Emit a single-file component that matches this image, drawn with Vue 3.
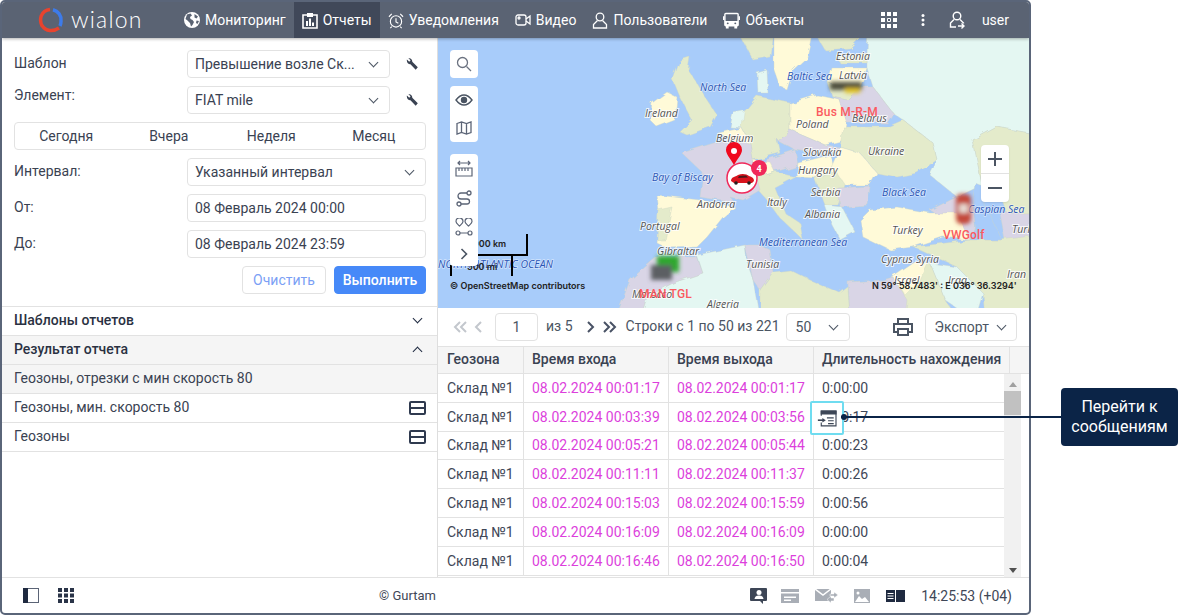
<script setup>
const navItems = [
  { label: 'Мониторинг', icon: 'globe' },
  { label: 'Отчеты', icon: 'report', active: true },
  { label: 'Уведомления', icon: 'alarm' },
  { label: 'Видео', icon: 'video' },
  { label: 'Пользователи', icon: 'user' },
  { label: 'Объекты', icon: 'bus' },
];

const quickRanges = ['Сегодня', 'Вчера', 'Неделя', 'Месяц'];

const rows = [
  ['00:01:17', '00:01:17', '0:00:00'],
  ['00:03:39', '00:03:56', '0:00:17'],
  ['00:05:21', '00:05:44', '0:00:23'],
  ['00:11:11', '00:11:37', '0:00:26'],
  ['00:15:03', '00:15:59', '0:00:56'],
  ['00:16:09', '00:16:09', '0:00:00'],
  ['00:16:46', '00:16:50', '0:00:04'],
];

const land = [
  // russia, kazakhstan and the east
  { c: '#e4f7f2', p: '868,30 1040,30 1040,135 997,127 973,140 982,185 957,197 930,175 937,160 933,143 903,120 893,113 873,87 867,68 867,53' },
  { c: '#e4ebcb', p: '973,140 997,127 1040,135 1040,213 1007,213 1000,195 982,185' },
  { c: '#d9d5e6', p: '1000,213 1040,213 1040,240 1005,240' },
  { c: '#e4ebcb', p: '970,240 1000,240 1040,235 1040,320 985,320 983,293 957,267 913,247' },
  { c: '#e4f7f2', p: '930,263 957,267 983,293 975,320 945,300' },
  { c: '#e4ebcb', p: '850,282 882,282 930,263 945,300 960,320 850,320' },
  { c: '#d9d5e6', p: '848,282 883,280 893,277 907,300 905,320 850,320' },
  { c: '#fffad8', p: '893,277 915,262 928,264 918,285 905,295' },
  // caucasus and caspian
  { c: '#d9d5e6', p: '930,210 957,197 972,205 975,225 970,240 955,225' },
  { c: '#a8ccfa', p: '975,183 985,187 985,205 995,225 1002,240 985,240 975,232 972,205' },
  // scandinavia
  { c: '#e4ebcb', p: '737,30 773,30 770,57 753,60' },
  { c: '#fffad8', p: '773,30 813,30 807,57 793,70 787,90 780,87 773,67' },
  { c: '#e4ebcb', p: '813,30 868,30 850,48 825,50' },
  { c: '#e4f7f2', p: '757,73 767,70 768,93 758,93' },
  // baltics
  { c: '#e4ebcb', p: '837,57 867,53 867,63 840,63' },
  { c: '#fffad8', p: '832,68 867,68 863,80 860,87 828,83' },
  { c: '#e4ebcb', p: '828,83 860,87 847,100 833,97' },
  // british isles
  { c: '#e4ebcb', p: '680,60 690,57 688,70 697,83 707,100 717,115 710,127 687,135 680,132 692,120 685,107 680,97 673,80' },
  { c: '#fffad8', p: '652,103 667,92 677,97 675,120 657,127 650,120' },
  // central europe
  { c: '#e4f7f2', p: '733,113 748,110 744,128 730,127' },
  { c: '#fffad8', p: '718,133 742,128 750,143 735,142' },
  { c: '#e4ebcb', p: '744,112 757,96 790,103 790,130 777,140 780,153 753,160 750,143 742,128' },
  { c: '#fffad8', p: '790,103 817,95 840,100 847,123 845,140 825,145 790,130' },
  { c: '#d9d5e6', p: '833,97 847,100 860,87 873,87 893,113 887,123 847,123 840,100' },
  { c: '#e4ebcb', p: '843,127 887,127 903,120 933,143 937,160 917,173 897,177 877,173 860,153 840,147' },
  { c: '#d9d5e6', p: '777,140 790,130 825,145 840,147 830,155 795,150' },
  { c: '#d9d5e6', p: '765,160 795,150 798,165 775,172' },
  { c: '#fffad8', p: '798,163 830,155 835,170 815,178 796,177' },
  { c: '#fffad8', p: '840,147 860,153 877,173 870,185 840,185 830,170' },
  { c: '#e4ebcb', p: '815,178 835,170 845,185 838,205 825,205' },
  { c: '#d9d5e6', p: '838,188 870,186 868,205 840,207' },
  // switzerland and italy
  { c: '#fffad8', p: '753,160 770,162 775,172 757,178' },
  { c: '#e4ebcb', p: '757,178 775,172 796,177 775,188 785,213 800,223 803,240 795,232 780,218 767,200 758,190' },
  // france, iberia
  { c: '#d9d5e6', p: '682,153 717,142 735,142 750,143 753,160 757,178 760,190 743,200 730,197 735,203 700,197 703,173' },
  { c: '#fffad8', p: '657,195 700,200 735,207 723,217 707,237 697,247 667,248 657,243 660,220' },
  { c: '#e4ebcb', p: '658,210 672,207 665,240 657,240' },
  // greece, turkey
  { c: '#e4f7f2', p: '825,205 842,207 855,232 840,240 832,225' },
  { c: '#fffad8', p: '860,220 870,210 897,207 930,213 957,213 970,240 943,237 913,247 890,250 863,237' },
  // north africa
  { c: '#d9d5e6', p: '657,257 697,257 703,273 673,283 647,297 640,320 615,320 630,280' },
  { c: '#e4f7f2', p: '697,255 745,245 747,262 753,280 760,320 640,320 647,297 673,283 703,273' },
  { c: '#d9d5e6', p: '745,245 760,245 770,250 773,272 760,290 753,280' },
  { c: '#e4ebcb', p: '773,272 790,270 810,280 840,293 848,287 850,320 760,320 760,290' },
];

const seaLabels = [
  { t: 'Baltic Sea', x: 787, y: 80 },
  { t: 'North Sea', x: 700, y: 91 },
  { t: 'Bay of Biscay', x: 652, y: 181 },
  { t: 'Black Sea', x: 882, y: 196 },
  { t: 'Caspian Sea', x: 968, y: 213 },
  { t: 'Mediterranean Sea', x: 759, y: 246 },
  { t: 'NORTH ATLANTIC OCEAN', x: 438, y: 268 },
];

const countryLabels = [
  { t: 'Estonia', x: 836, y: 60 },
  { t: 'Latvia', x: 839, y: 79 },
  { t: 'Ireland', x: 645, y: 117 },
  { t: 'Poland', x: 796, y: 128 },
  { t: 'Belarus', x: 852, y: 122 },
  { t: 'Belgium', x: 716, y: 142 },
  { t: 'Slovakia', x: 803, y: 156 },
  { t: 'Ukraine', x: 868, y: 155 },
  { t: 'Hungary', x: 798, y: 174 },
  { t: 'Andorra', x: 697, y: 208 },
  { t: 'Serbia', x: 811, y: 196 },
  { t: 'Italy', x: 767, y: 206 },
  { t: 'Portugal', x: 640, y: 230 },
  { t: 'Albania', x: 805, y: 218 },
  { t: 'Turkey', x: 892, y: 234 },
  { t: 'Gibraltar', x: 657, y: 255 },
  { t: 'Cyprus', x: 881, y: 263 },
  { t: 'Syria', x: 916, y: 263 },
  { t: 'Tunisia', x: 746, y: 268 },
  { t: 'Iran', x: 1007, y: 278 },
  { t: 'Israel', x: 894, y: 284 },
  { t: 'Iraq', x: 948, y: 284 },
  { t: 'Turk', x: 1012, y: 233 },
  { t: 'Morocco', x: 632, y: 298 },
  { t: 'Algeria', x: 707, y: 308 },
];
</script>

<template>
  <div class="page">
    <div class="window">
      <header class="topbar">
        <div class="logo">
          <svg width="26" height="26" viewBox="0 0 26 26" fill="none" stroke-width="3.500">
            <path d="M12 2.500A10.500 10.500 0 0 0 3.200 9C2 13 2.500 16 4 19" stroke="#e8432e" />
            <path d="M15 2.700A10.500 10.500 0 0 1 23 14C23 16 22.700 17.500 22 19" stroke="#3d7bea" />
            <path d="M4 18.500C8 24.500 15 25 21 21" stroke="#e8432e" />
          </svg>
          <span class="logo-text">wialon</span>
        </div>
        <nav class="nav">
          <a v-for="item in navItems" :key="item.label" class="nav-item" :class="{ 'nav-item--active': item.active }">
            <svg v-if="item.icon === 'globe'" width="16" height="16" viewBox="0 0 16 16">
              <circle cx="8" cy="8" r="8" fill="#fff" />
              <path d="M3 2.500 6.500 1.500 8 3.500 6 5 6.500 7 8.500 8 10 10 8.500 13 7 14.500 6 11 3.500 8.500 1.500 7ZM10.500 2 14 4.500 12.500 6.500 10.500 5.500ZM12.500 8.500 15 9 13.500 12 12 11Z" fill="#5a6373" />
            </svg>
            <svg v-else-if="item.icon === 'report'" width="16" height="17" viewBox="0 0 16 17">
              <path d="M1 3h14v13H1z" fill="none" stroke="#fff" stroke-width="1.600" />
              <path d="M5 1h6v4H5zM4 9h2v5H4zM7 6.500h2V14H7zM10 10.500h2V14h-2z" fill="#fff" />
            </svg>
            <svg v-else-if="item.icon === 'alarm'" width="16" height="17" viewBox="0 0 17 17" fill="none" stroke="#fff" stroke-width="1.200">
              <circle cx="8.500" cy="9.500" r="6" />
              <path d="M8.500 6v4l2.500 1.500M1 4.500 4 1.500M16 4.500l-3-3M4 15l-1.500 1.500M13 15l1.500 1.500" />
            </svg>
            <svg v-else-if="item.icon === 'video'" width="16" height="14" viewBox="0 0 16 14" fill="none" stroke="#fff" stroke-width="1.300">
              <rect x="1" y="2" width="10" height="10" rx="2" />
              <path d="M11 6 15 3v8l-4-3" />
              <circle cx="4" cy="5" r="1" />
            </svg>
            <svg v-else-if="item.icon === 'user'" width="16" height="17" viewBox="0 0 16 17" fill="none" stroke="#fff" stroke-width="1.300">
              <circle cx="8" cy="5" r="3.800" />
              <path d="M5.500 8.500 1.500 12.500V16h13v-3.500l-4-4" />
            </svg>
            <svg v-else width="17" height="17" viewBox="0 0 18 17">
              <path d="M3 1h12a1 1 0 0 1 1 1v11a1 1 0 0 1-1 1H3a1 1 0 0 1-1-1V2a1 1 0 0 1 1-1Z" fill="none" stroke="#fff" stroke-width="1.500" />
              <path d="M2 9h14v5H2zM3 14h3v3H3zM12 14h3v3h-3zM0 4h1.500v4H0zM16.500 4H18v4h-1.500z" fill="#fff" />
              <circle cx="5" cy="11.500" r="1" fill="#5a6373" />
              <circle cx="13" cy="11.500" r="1" fill="#5a6373" />
            </svg>
            <span>{{ item.label }}</span>
          </a>
        </nav>
        <div class="topbar-right">
          <svg width="16" height="16" viewBox="0 0 16 16" fill="#fff">
            <path d="M0 0h4v4H0zM6 0h4v4H6zM12 0h4v4h-4zM0 6h4v4H0zM12 6h4v4h-4zM0 12h4v4H0zM6 12h4v4H6zM12 12h4v4h-4z" />
            <path d="M6.500 6.500h3v3h-3z" fill="none" stroke="#fff" />
          </svg>
          <svg class="kebab" width="4" height="12" viewBox="0 0 4 12" fill="#fff">
            <circle cx="2" cy="1.500" r="1.500" />
            <circle cx="2" cy="6" r="1.500" />
            <circle cx="2" cy="10.500" r="1.500" />
          </svg>
          <svg class="user-icon" width="16" height="18" viewBox="0 0 16 18" fill="none" stroke="#fff" stroke-width="1.400">
            <circle cx="8" cy="5" r="3.800" />
            <path d="M5 8.500 1.500 12v4H7M11 8.500 14.500 12v.5M9 15h6M12.500 12.500 15 15l-2.500 2.500" />
          </svg>
          <span class="user-name">user</span>
        </div>
      </header>

      <div class="main">
        <aside class="side">
          <div class="form">
            <div class="form-row">
              <label class="form-label">Шаблон</label>
              <div class="select select--short"><span class="ellipsis">Превышение возле Ск...</span><i class="chev"></i></div>
              <svg class="wrench" width="12" height="12" viewBox="0 0 13 13"><path d="M1 1.500 3.500 4 5 2.500 2.500.3C5-.3 7 1.500 6.800 4L12.800 10 10.500 12.800 4.800 6.800C2.500 7 .3 4.500 1 1.500Z" fill="#3a4252" /></svg>
            </div>
            <div class="form-row">
              <label class="form-label form-label--up">Элемент:</label>
              <div class="select select--short"><span>FIAT mile</span><i class="chev"></i></div>
              <svg class="wrench" width="12" height="12" viewBox="0 0 13 13"><path d="M1 1.500 3.500 4 5 2.500 2.500.3C5-.3 7 1.500 6.800 4L12.800 10 10.500 12.800 4.800 6.800C2.500 7 .3 4.500 1 1.500Z" fill="#3a4252" /></svg>
            </div>
            <div class="ranges">
              <span v-for="range in quickRanges" :key="range">{{ range }}</span>
            </div>
            <div class="form-row">
              <label class="form-label form-label--low">Интервал:</label>
              <div class="select"><span>Указанный интервал</span><i class="chev"></i></div>
            </div>
            <div class="form-row">
              <label class="form-label">От:</label>
              <div class="select"><span>08 Февраль 2024 00:00</span></div>
            </div>
            <div class="form-row">
              <label class="form-label">До:</label>
              <div class="select"><span>08 Февраль 2024 23:59</span></div>
            </div>
            <div class="form-actions">
              <button type="button" class="btn btn--ghost">Очистить</button>
              <button type="button" class="btn btn--primary">Выполнить</button>
            </div>
          </div>

          <div class="section">
            <span>Шаблоны отчетов</span><i class="chev chev--dark"></i>
          </div>
          <div class="section section--open">
            <span>Результат отчета</span><i class="chev chev--dark chev--up"></i>
          </div>
          <div class="result result--active"><span>Геозоны, отрезки с мин скорость 80</span></div>
          <div class="result">
            <span>Геозоны, мин. скорость 80</span>
            <svg width="17" height="14" viewBox="0 0 17 14" fill="none" stroke="#2f3a4f" stroke-width="2"><rect x="1" y="1" width="15" height="12" rx="1" /><path d="M1 7h15" /></svg>
          </div>
          <div class="result">
            <span>Геозоны</span>
            <svg width="17" height="14" viewBox="0 0 17 14" fill="none" stroke="#2f3a4f" stroke-width="2"><rect x="1" y="1" width="15" height="12" rx="1" /><path d="M1 7h15" /></svg>
          </div>
        </aside>

        <section class="content">
          <div class="map">
            <svg class="map-canvas" viewBox="438 38 591 270" width="591" height="270">
              <defs>
                <filter id="smudge"><feGaussianBlur stdDeviation="2" /></filter>
                <filter id="coast" x="-5%" y="-5%" width="110%" height="110%">
                  <feTurbulence type="fractalNoise" baseFrequency="0.09" numOctaves="2" seed="4" />
                  <feDisplacementMap in="SourceGraphic" scale="6" />
                </filter>
              </defs>
              <rect x="438" y="38" width="591" height="270" fill="#a8ccfa" />
              <g filter="url(#coast)">
                <polygon v-for="(shape, i) in land" :key="i" :points="shape.p" :fill="shape.c" stroke="#cfd6c4" stroke-width="0.400" />
              </g>
              <text v-for="label in countryLabels" :key="label.t" class="map-country" :x="label.x" :y="label.y">{{ label.t }}</text>
              <text v-for="label in seaLabels" :key="label.t" class="map-sea" :x="label.x" :y="label.y">{{ label.t }}</text>

              <g filter="url(#smudge)">
                <rect x="830" y="82" width="32" height="8" fill="#4e4e3e" />
                <rect x="845" y="88" width="15" height="5" fill="#e0c020" />
                <rect x="956" y="194" width="15" height="30" rx="5" fill="#c44a3a" />
                <rect x="959" y="204" width="9" height="9" fill="#e6d8d0" />
                <rect x="657" y="256" width="22" height="16" fill="#2fa82f" />
                <rect x="651" y="265" width="21" height="15" fill="#5b5f63" />
              </g>

              <path d="M734 165C730 158 726 154 726 150A8 8 0 0 1 742 150C742 154 738 158 734 165Z" fill="#f00a1e" />
              <circle cx="734" cy="151" r="3" fill="#fff" />
              <circle cx="742" cy="178" r="15" fill="#fff" stroke="#f0295a" stroke-width="1.500" />
              <path d="M731 181C731 177 735 177 738 175 742 173 747 174 749 176 752 177 754 178 754 181L752 183H734Z" fill="#d8141e" />
              <path d="M739 176 746 175.500 748 177.500 738 178Z" fill="#4a1a1a" />
              <circle cx="736" cy="183" r="1.800" fill="#222" />
              <circle cx="749" cy="183" r="1.800" fill="#222" />
              <circle cx="759" cy="168" r="8" fill="#f0295a" />
              <text class="map-badge" x="759" y="171.500">4</text>

              <text class="map-unit" x="816" y="116">Bus M-R-M</text>
              <text class="map-unit" x="943" y="239">VWGolf</text>
              <text class="map-unit" x="639" y="298">MAN TGL</text>

              <path d="M527 234v21H478M451 265v11M451 255h61M512 255v21" fill="none" stroke="#000" stroke-width="2" />
              <text class="map-note" x="469" y="247">1000 km</text>
              <text class="map-note" x="467" y="270">500 mi</text>
              <text class="map-note" x="450" y="289">© OpenStreetMap contributors</text>
              <text class="map-note" x="872" y="289">N 59° 58.7483' : E 036° 36.3294'</text>
            </svg>

            <div class="map-tools">
              <div class="tool-group">
                <svg width="16" height="16" viewBox="0 0 16 16" fill="none" stroke="#6b7280" stroke-width="1.300"><circle cx="6.500" cy="6.500" r="5" /><path d="m10.500 10.500 4.500 4.500" /></svg>
              </div>
              <div class="tool-group tool-group--pair">
                <svg width="18" height="12" viewBox="0 0 18 12" fill="none" stroke="#4b5563" stroke-width="1.400"><path d="M1 6C4 2 6.500 1 9 1s5 1 8 5c-3 4-5.500 5-8 5S4 10 1 6Z" /><circle cx="9" cy="6" r="2.500" fill="#4b5563" /></svg>
                <svg width="16" height="14" viewBox="0 0 16 14" fill="none" stroke="#5b6476" stroke-width="1.300"><path d="M1 2.500 5.500 1l5 1.500L15 1v10.500L10.500 13l-5-1.500L1 13ZM5.500 1v10.500M10.500 2.500V13" /></svg>
              </div>
              <div class="tool-group tool-group--long">
                <svg width="18" height="18" viewBox="0 0 18 18" fill="none" stroke="#5b6476" stroke-width="1.200"><path d="M1 8h16v8H1zM4 8v3M7 8v3M10 8v3M13 8v3M3 3h12M5 1 3 3l2 2M13 1l2 2-2 2" /></svg>
                <svg width="16" height="17" viewBox="0 0 16 17" fill="none" stroke="#5b6476" stroke-width="1.300"><circle cx="13" cy="3" r="2" /><circle cx="3" cy="14" r="2" /><path d="M11 3H5a3 3 0 0 0 0 6h6a2.500 2.500 0 0 1 0 5H5" /></svg>
                <svg width="18" height="18" viewBox="0 0 18 18" fill="none" stroke="#5b6476" stroke-width="1.200"><path d="M4.500 8C2.500 6 1 5 1 3.500a3.500 3.500 0 0 1 7 0C8 5 6.500 6 4.500 8ZM13.500 8C11.500 6 10 5 10 3.500a3.500 3.500 0 0 1 7 0C17 5 15.500 6 13.500 8Z" /><circle cx="3" cy="15" r="2" /><circle cx="15" cy="15" r="2" /><path d="M5 15h8" /></svg>
                <svg width="8" height="12" viewBox="0 0 8 12" fill="none" stroke="#4b5563" stroke-width="1.600"><path d="m1.500 1 5 5-5 5" /></svg>
              </div>
            </div>

            <div class="map-zoom">
              <span class="zoom-btn">
                <svg width="14" height="14" viewBox="0 0 14 14" fill="#4b5563"><path d="M6 0h2v14H6zM0 6h14v2H0z" /></svg>
              </span>
              <span class="zoom-btn">
                <svg width="14" height="2" viewBox="0 0 14 2" fill="#4b5563"><path d="M0 0h14v2H0z" /></svg>
              </span>
            </div>
          </div>

          <div class="pager">
            <svg class="pager-first" width="15" height="12" viewBox="0 0 15 12" fill="none" stroke="#c3c7cd" stroke-width="2"><path d="M7 1 2 6l5 5M13 1 8 6l5 5" /></svg>
            <svg class="pager-prev" width="8" height="12" viewBox="0 0 8 12" fill="none" stroke="#c3c7cd" stroke-width="2"><path d="M7 1 2 6l5 5" /></svg>
            <span class="page-input">1</span>
            <span class="page-total">из 5</span>
            <svg class="pager-next" width="8" height="12" viewBox="0 0 8 12" fill="none" stroke="#495265" stroke-width="2"><path d="m1 1 5 5-5 5" /></svg>
            <svg class="pager-last" width="15" height="12" viewBox="0 0 15 12" fill="none" stroke="#495265" stroke-width="2"><path d="m2 1 5 5-5 5M8 1l5 5-5 5" /></svg>
            <span class="pager-info">Строки с 1 по 50 из 221</span>
            <div class="pager-select"><span>50</span><i class="chev"></i></div>
            <svg class="printer" width="20" height="18" viewBox="0 0 20 18" fill="none" stroke="#4b5563" stroke-width="2"><path d="M5 5V1h10v4M5 14H1V6h18v8h-4M5 11h10v6H5z" /></svg>
            <div class="pager-export"><span>Экспорт</span><i class="chev"></i></div>
          </div>

          <div class="table">
            <div class="table-head">
              <span class="cell cell--zone">Геозона</span>
              <span class="cell cell--time">Время входа</span>
              <span class="cell cell--time">Время выхода</span>
              <span class="cell cell--span">Длительность нахождения</span>
            </div>
            <div class="table-main">
              <div class="table-body">
                <div v-for="(row, i) in rows" :key="i" class="table-row">
                  <span class="cell cell--zone">Склад №1</span>
                  <span class="cell cell--time cell--link">08.02.2024 {{ row[0] }}</span>
                  <span class="cell cell--time cell--link">08.02.2024 {{ row[1] }}</span>
                  <span class="cell cell--span">{{ row[2] }}</span>
                </div>
              </div>
              <div class="scrollbar">
                <i class="scroll-up"></i>
                <i class="scroll-thumb"></i>
                <i class="scroll-down"></i>
              </div>
            </div>
          </div>
        </section>
      </div>

      <footer class="footer">
        <div class="footer-left">
          <svg width="16" height="15" viewBox="0 0 16 15"><rect x="0.500" y="0.500" width="15" height="14" fill="none" stroke="#5b6476" /><rect width="5" height="15" fill="#1f2a40" /></svg>
          <svg width="16" height="15" viewBox="0 0 16 15" fill="#2a3448"><path d="M0 0h4v4H0zM6 0h4v4H6zM12 0h4v4h-4zM0 5.500h4v4H0zM6 5.500h4v4H6zM12 5.500h4v4h-4zM0 11h4v4H0zM6 11h4v4H6zM12 11h4v4h-4z" /></svg>
        </div>
        <span class="copyright">© Gurtam</span>
        <div class="footer-right">
          <svg class="footer-msg" width="17" height="16" viewBox="0 0 17 16"><path d="M1 0h15a1 1 0 0 1 1 1v11a1 1 0 0 1-1 1h-3v3l-3-3H1a1 1 0 0 1-1-1V1a1 1 0 0 1 1-1Z" fill="#3d4656" /><circle cx="9" cy="4.500" r="2.500" fill="#fff" /><path d="M4.500 11c.5-3 2.500-3.500 4.500-3.500s4 .5 4.500 3.500Z" fill="#fff" /></svg>
          <svg width="18" height="14" viewBox="0 0 18 14"><rect width="18" height="14" fill="#a9aeb6" /><path d="M0 3h18v1.500H0z" fill="#fff" /><path d="M3 7.500h12V9H3zM3 10.500h7V12H3z" fill="#fff" /></svg>
          <svg width="23" height="14" viewBox="0 0 23 14"><path d="M0 0h16v12H0z" fill="#a9aeb6" /><path d="m0 0 8 6 8-6" fill="none" stroke="#fff" stroke-width="1.500" /><path d="M15 5h4V3l4 3-4 3V7h-4zM19 9h-3V7l-4 3.500 4 3.500v-2h3z" fill="#a9aeb6" stroke="#fff" stroke-width="0.500" /></svg>
          <svg width="16" height="14" viewBox="0 0 16 14"><rect width="16" height="14" fill="#a9aeb6" /><path d="M1 13 5 7l3 3 3-2 4 5Z" fill="#fff" /><circle cx="4" cy="4" r="1.500" fill="#fff" /></svg>
          <svg width="19" height="12" viewBox="0 0 19 12"><rect width="9" height="12" fill="#1f2a40" /><rect x="10" width="9" height="12" fill="#1f2a40" /><path d="M1.500 3h6v1h-6zM1.500 5.500h6v1h-6zM1.500 8h6v1h-6z" fill="#fff" /></svg>
          <span class="clock">14:25:53 (+04)</span>
        </div>
      </footer>
    </div>

    <div class="hint-box">
      <svg width="21" height="17" viewBox="0 0 17 15" fill="none" stroke="#3d4656" stroke-width="1"><path d="M3 5V1h13v13H3v-3" /><path d="M3 1h13v2.500H3z" fill="#3d4656" /><path d="M8 7h6M9 9.500h5M9 12h5" /><path d="M0 9h5" stroke-width="1.400" /><path d="m4 7 3 2-3 2Z" fill="#3d4656" stroke="none" /></svg>
    </div>
    <div class="hint-line"></div>
    <div class="hint-tip">Перейти к сообщениям</div>
  </div>
</template>

<style scoped>
.page {
  position: relative;
  width: 1180px;
  height: 616px;
  background: #fff;
  overflow: hidden;
  font-family: Roboto, "Liberation Sans", sans-serif;
  font-size: 14px;
  color: #3f4757;
}

.window {
  box-sizing: border-box;
  width: 1031px;
  height: 615px;
  border: 2px solid #5a6579;
  border-radius: 5px;
  display: flex;
  flex-direction: column;
  overflow: hidden;
}

.topbar {
  flex: none;
  height: 36px;
  background: #5a6373;
  color: #fff;
  display: flex;
  align-items: center;
  box-shadow: 0 1px 3px rgba(0, 0, 0, 0.3);
  position: relative;
  z-index: 2;
}

.logo {
  width: 174px;
  padding-left: 36px;
  box-sizing: border-box;
  display: flex;
  align-items: center;
  gap: 7px;
}

.logo-text {
  font-family: Lato, sans-serif;
  font-weight: 300;
  font-size: 23px;
  letter-spacing: 1.200px;
  line-height: 1;
  margin-top: -2px;
}

.nav {
  display: flex;
  height: 100%;
}

.nav-item {
  height: 100%;
  display: flex;
  align-items: center;
  gap: 5px;
  padding: 0 8px;
}

.nav-item--active {
  background: #404859;
}

.topbar-right {
  margin-left: auto;
  display: flex;
  align-items: center;
  padding-right: 20px;
}

.kebab {
  margin-left: 24px;
}

.user-icon {
  margin-left: 24px;
}

.user-name {
  margin-left: 17px;
}

.main {
  flex: 1;
  min-height: 0;
  display: flex;
}

.side {
  flex: none;
  width: 436px;
  box-sizing: border-box;
  border-right: 1px solid #dedede;
  color: #3a4252;
}

.form {
  box-sizing: border-box;
  height: 268px;
  padding: 12px 11px 0 12px;
  display: flex;
  flex-direction: column;
  gap: 8px;
}

.form-row {
  display: flex;
  align-items: flex-start;
  height: 28px;
}

.form-label {
  flex: none;
  width: 173px;
  line-height: 20px;
  padding-top: 3px;
}

.form-label--up {
  padding-top: 0;
  margin-top: -1px;
}

.select {
  flex: 1;
  height: 28px;
  box-sizing: border-box;
  border: 1px solid #e2e2e2;
  border-radius: 4px;
  display: flex;
  align-items: center;
  justify-content: space-between;
  padding: 0 12px 0 7px;
  min-width: 0;
}

.select--short {
  flex: none;
  width: 203px;
}

.ellipsis {
  white-space: nowrap;
}

.wrench {
  margin: 8px 0 0 16px;
}

.chev {
  display: block;
  width: 6px;
  height: 6px;
  border-right: 1.500px solid #4b5563;
  border-bottom: 1.500px solid #4b5563;
  transform: translateY(-2px) rotate(45deg);
}

.chev--dark {
  border-color: #1f2a40;
}

.chev--up {
  transform: translateY(2px) rotate(225deg);
}

.ranges {
  height: 28px;
  box-sizing: border-box;
  border: 1px solid #e2e2e2;
  border-radius: 4px;
  display: grid;
  grid-template-columns: repeat(4, 1fr);
  align-items: center;
  justify-items: center;
}

.form-actions {
  display: flex;
  justify-content: flex-end;
  gap: 8px;
}

.btn {
  height: 28px;
  border-radius: 4px;
  border: 1px solid #e2e2e2;
  font: inherit;
  padding: 0;
}

.btn--ghost {
  width: 84px;
  background: #fff;
  color: #7b9ff5;
}

.btn--primary {
  width: 92px;
  background: #4689f8;
  border-color: #4689f8;
  color: #fff;
  font-weight: 500;
}

.section {
  height: 29px;
  box-sizing: border-box;
  border-top: 1px solid #e2e2e2;
  padding: 0 16px 2px 12px;
  display: flex;
  align-items: center;
  justify-content: space-between;
  font-weight: 500;
  color: #2a3142;
}

.section--open {
  background: #f5f5f5;
}

.result {
  height: 29px;
  box-sizing: border-box;
  border-top: 1px solid #e2e2e2;
  padding: 0 11px 0 12px;
  display: flex;
  align-items: center;
  justify-content: space-between;
}

.result span {
  position: relative;
  top: -1px;
}

.result:last-child {
  border-bottom: 1px solid #e2e2e2;
  height: 30px;
}

.result--active {
  background: #f5f5f5;
}

.content {
  flex: 1;
  min-width: 0;
  display: flex;
  flex-direction: column;
}

.map {
  position: relative;
  flex: none;
  height: 270px;
  overflow: hidden;
}

.map-canvas {
  display: block;
}

.map-country {
  font-family: "Open Sans", sans-serif;
  font-style: italic;
  font-size: 10.500px;
  fill: #555;
  stroke: #fff;
  stroke-width: 2px;
  stroke-opacity: 0.8;
  paint-order: stroke;
}

.map-sea {
  font-family: "Open Sans", sans-serif;
  font-style: italic;
  font-size: 10.500px;
  fill: #2a55b5;
  stroke: #fff;
  stroke-width: 1.500px;
  stroke-opacity: 0.5;
  paint-order: stroke;
}

.map-badge {
  font-size: 9px;
  font-weight: 700;
  fill: #fff;
  text-anchor: middle;
}

.map-unit {
  font-size: 12px;
  font-weight: 500;
  fill: #fb5a5f;
  letter-spacing: 0.200px;
}

.map-note {
  font-family: Inter, sans-serif;
  font-size: 9px;
  font-weight: 600;
  fill: #222;
}

.map-tools {
  position: absolute;
  left: 12px;
  top: 12px;
  display: flex;
  flex-direction: column;
  gap: 8px;
}

.tool-group {
  width: 28px;
  height: 28px;
  box-sizing: border-box;
  background: #fff;
  border-radius: 4px;
  display: flex;
  flex-direction: column;
  align-items: center;
  justify-content: space-around;
}

.tool-group--pair {
  height: 56px;
}

.tool-group--long {
  margin-top: 4px;
  height: 112px;
}

.map-zoom {
  position: absolute;
  left: 543px;
  top: 107px;
  width: 28px;
  height: 57px;
  background: #fff;
  border-radius: 4px;
  display: flex;
  flex-direction: column;
  box-shadow: 0 1px 2px rgba(0, 0, 0, 0.1);
}

.zoom-btn {
  flex: 1;
  display: flex;
  align-items: center;
  justify-content: center;
}

.zoom-btn + .zoom-btn {
  border-top: 1px solid #e2e2e2;
}

.pager {
  flex: none;
  height: 38px;
  display: flex;
  align-items: center;
  color: #4b5563;
}

.pager-first {
  margin-left: 15px;
}

.pager-prev {
  margin-left: 6px;
}

.page-input {
  margin-left: 13px;
  width: 43px;
  height: 28px;
  box-sizing: border-box;
  border: 1px solid #e2e2e2;
  border-radius: 4px;
  display: flex;
  align-items: center;
  justify-content: center;
}

.page-total {
  margin-left: 8px;
  position: relative;
  top: -1px;
}

.pager-next {
  margin-left: 14px;
}

.pager-last {
  margin-left: 7px;
}

.pager-info {
  margin-left: 9px;
  width: 151px;
  white-space: nowrap;
  position: relative;
  top: -1px;
}

.pager-select {
  margin-left: 9px;
  width: 64px;
  height: 28px;
  box-sizing: border-box;
  border: 1px solid #e2e2e2;
  border-radius: 4px;
  display: flex;
  align-items: center;
  justify-content: space-between;
  padding: 0 12px 0 9px;
}

.printer {
  margin-left: 43px;
}

.pager-export {
  margin-left: 12px;
  width: 92px;
  height: 28px;
  box-sizing: border-box;
  border: 1px solid #e2e2e2;
  border-radius: 4px;
  display: flex;
  align-items: center;
  justify-content: space-between;
  padding: 0 11px 0 9px;
}

.table {
  flex: 1;
  min-height: 0;
  display: flex;
  flex-direction: column;
  overflow: hidden;
}

.table-head {
  flex: none;
  height: 28px;
  box-sizing: border-box;
  background: #f5f5f5;
  border-top: 1px solid #e2e2e2;
  border-bottom: 1px solid #e2e2e2;
  display: flex;
  font-weight: 500;
  color: #3a4252;
}

.table-head .cell {
  padding-bottom: 2px;
}

.table-main {
  flex: 1;
  min-height: 0;
  display: flex;
}

.table-body {
  flex: none;
  width: 566px;
  overflow: hidden;
}

.table-row {
  height: 28.800px;
  box-sizing: border-box;
  display: flex;
  border-bottom: 1px solid #e2e2e2;
}

.cell {
  flex: none;
  box-sizing: border-box;
  display: flex;
  align-items: center;
  padding-left: 8px;
  border-right: 1px solid #e2e2e2;
  white-space: nowrap;
}

.cell--zone {
  width: 86px;
  padding-left: 9px;
}

.cell--time {
  width: 145px;
}

.cell--span {
  width: 196px;
}

.table-row .cell--span {
  width: 190px;
  border-right: 0;
}

.cell--link {
  color: #dc3fdc;
}

.scrollbar {
  flex: none;
  width: 17px;
  position: relative;
  background: #f1f1f1;
}

.scroll-up {
  position: absolute;
  left: 5px;
  top: 8px;
  border: 4px solid transparent;
  border-top: 0;
  border-bottom: 5px solid #a0a0a0;
}

.scroll-thumb {
  position: absolute;
  left: 0;
  right: 0;
  top: 17px;
  height: 24px;
  background: #c1c1c1;
}

.scroll-down {
  position: absolute;
  left: 5px;
  bottom: 4px;
  border: 4px solid transparent;
  border-bottom: 0;
  border-top: 5px solid #505050;
}

.footer {
  flex: none;
  height: 36px;
  border-top: 1px solid #e2e2e2;
  box-sizing: border-box;
  display: flex;
  align-items: center;
  position: relative;
  color: #3f4757;
}

.footer-left {
  display: flex;
  align-items: center;
  gap: 19px;
  padding-left: 21px;
}

.copyright {
  position: absolute;
  left: 377px;
  font-size: 13px;
}

.footer-right {
  margin-left: auto;
  display: flex;
  align-items: center;
  gap: 16px;
  padding-right: 17px;
}

.footer-msg {
  margin-right: -2px;
}

.hint-box {
  position: absolute;
  left: 810px;
  top: 401px;
  width: 34px;
  height: 34px;
  box-sizing: border-box;
  border: 2px solid #6fdcf0;
  border-radius: 2px;
  background: #fff;
  display: flex;
  align-items: center;
  justify-content: center;
}

.hint-line {
  position: absolute;
  left: 841px;
  top: 416px;
  width: 220px;
  height: 2px;
  background: #0b2447;
}

.hint-line::before {
  content: "";
  position: absolute;
  left: 0;
  top: -2px;
  width: 6px;
  height: 6px;
  border-radius: 50%;
  background: #0b2447;
}

.hint-tip {
  position: absolute;
  left: 1061px;
  top: 388px;
  width: 117px;
  height: 58px;
  box-sizing: border-box;
  padding: 0 8px;
  background: #0b2447;
  border-radius: 4px;
  color: #fff;
  font-size: 16px;
  line-height: 20px;
  display: flex;
  align-items: center;
  justify-content: center;
  text-align: center;
}
</style>

<style>
html,
body {
  margin: 0;
  background: #fff;
}
</style>
